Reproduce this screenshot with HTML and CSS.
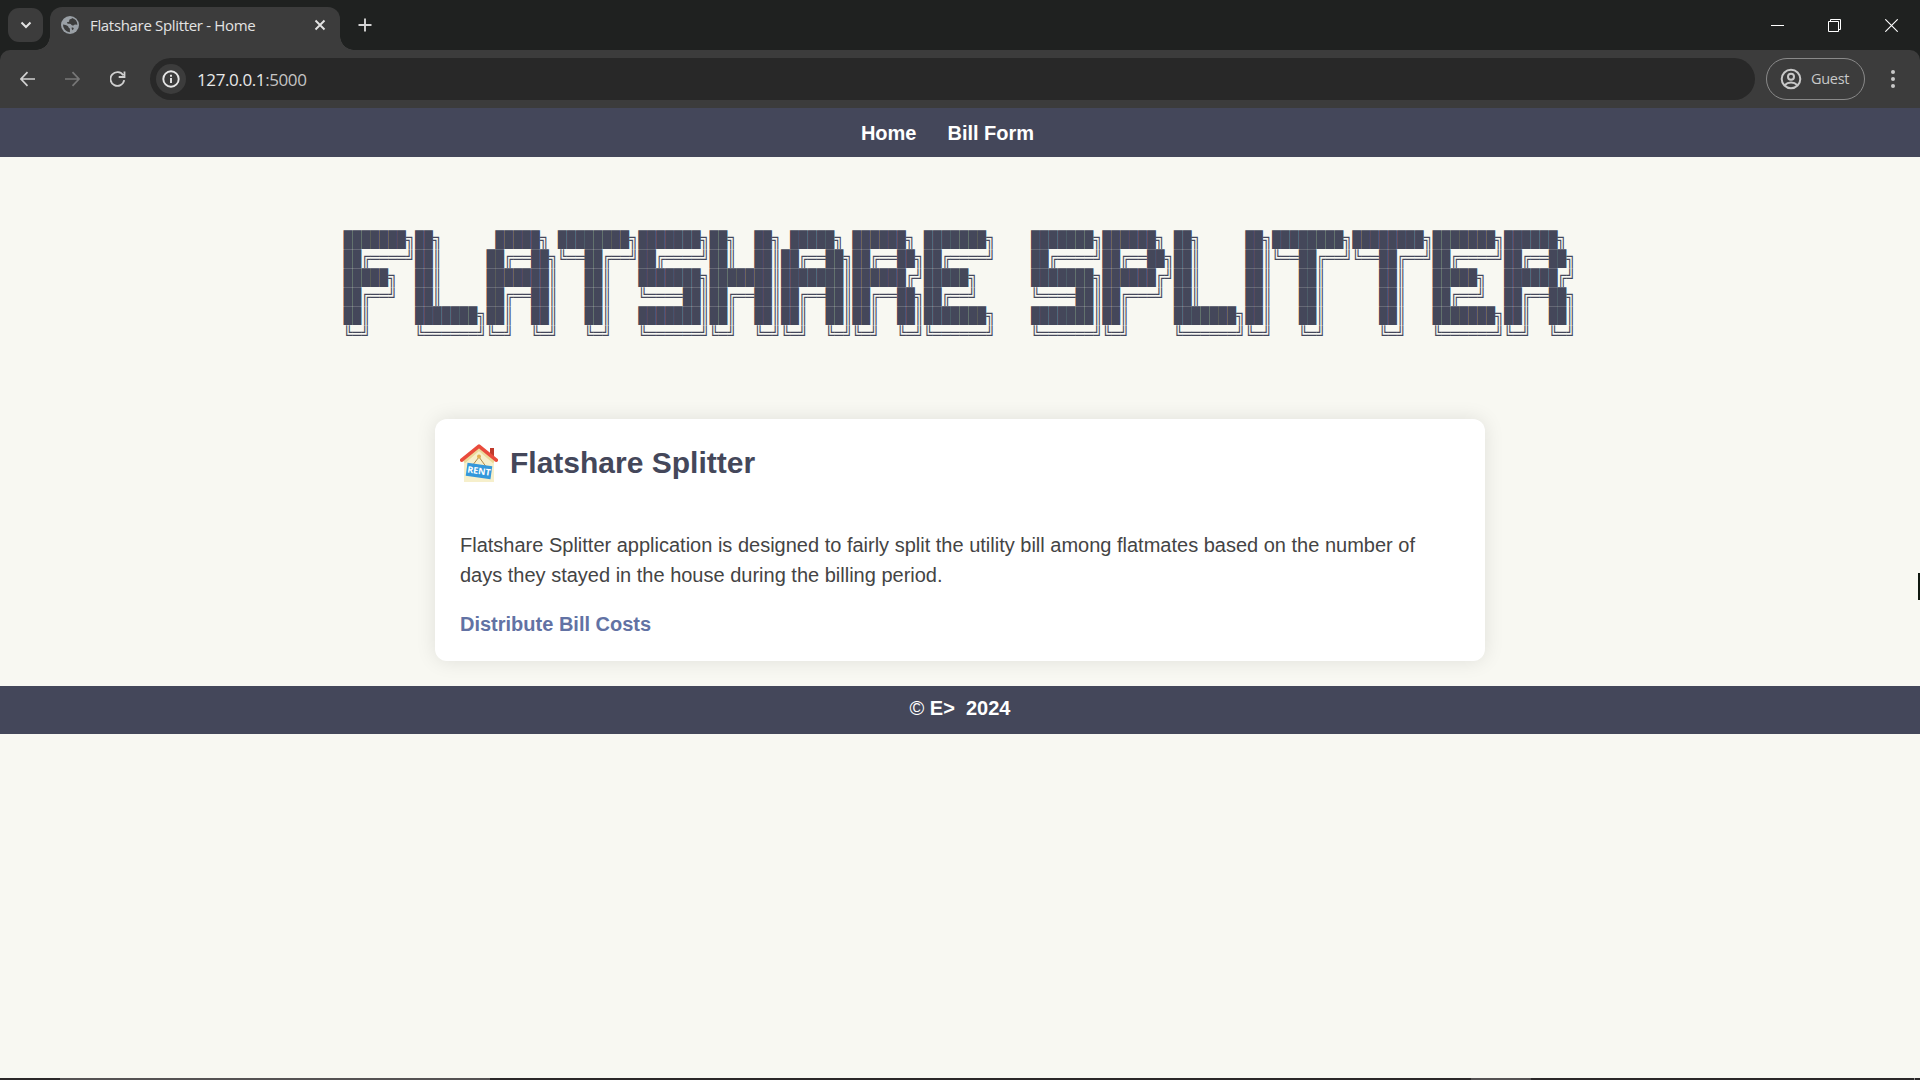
FILE: index.html
```html
<!DOCTYPE html>
<html lang="en">
<head>
<meta charset="utf-8">
<title>Flatshare Splitter - Home</title>
<link rel="stylesheet" href="styles.css">
</head>
<body>
<div class="browser">
  <div class="tabstrip">
    <button class="tab-search" aria-label="Search tabs">
      <svg width="12" height="8" viewBox="0 0 12 8"><path d="M1.5 1.5 6 6l4.500-4.500" fill="none" stroke="#e3e3e3" stroke-width="2"/></svg>
    </button>
    <div class="tab">
      <svg class="globe" width="18" height="18" viewBox="0 0 18 18"><circle cx="9" cy="9" r="9" fill="#9aa0a6"/><path d="M2 8.500c1.500.2 3.500.3 5 1.800.9.900.2 1.900 1.900 2.200v3.800A7.400 7.400 0 0 1 2 8.500zM11 2c-.2 1.300-1.800 1-2.400 1.600-.8.800.2 1.500-.7 2.200-.8.600-1.700.100-2 1 0 1 1.800.9 2.900.9 1.500 0 1.500 1.900 3 1.900 1.200 0 1.300-1 2.200-1.100l2.400.200A7.300 7.300 0 0 0 11 2zM10.500 11.800c.9-.6 2-.4 2.200.5.200 1-.8 1.400-1.500 1.900z" fill="#3c3c3c"/></svg>
      <span class="tab-title">Flatshare Splitter - Home</span>
      <svg class="tab-close" width="12" height="12" viewBox="0 0 12 12"><path d="M1.500 1.500l9 9m0-9l-9 9" stroke="#e3e3e3" stroke-width="1.900"/></svg>
    </div>
    <svg class="new-tab" width="14" height="14" viewBox="0 0 14 14"><path d="M7 .5v13M.5 7h13" stroke="#d4d4d4" stroke-width="1.900"/></svg>
    <div class="window-buttons">
      <svg width="13" height="13" viewBox="0 0 13 13"><path d="M0 6.500h13" stroke="#fff"/></svg>
      <svg width="13" height="13" viewBox="0 0 13 13"><path d="M.5 2.500h10v10H.5zM2.500 2.500v-2h10v10h-2" fill="none" stroke="#fff"/></svg>
      <svg width="13" height="13" viewBox="0 0 13 13"><path d="M.3.3l12.400 12.400M12.700.3L.3 12.700" stroke="#fff" stroke-width="1.100"/></svg>
    </div>
  </div>
  <div class="toolbar">
    <svg class="tool" width="16" height="16" viewBox="0 0 16 16"><path d="M15 8H1.500M7.500 1.200 1 8 7.500 14.800" fill="none" stroke="#d0d0d0" stroke-width="1.700"/></svg>
    <svg class="tool" width="16" height="16" viewBox="0 0 16 16"><path d="M0 8H13.500M7.500 1.200 14 8 7.500 14.800" fill="none" stroke="#777" stroke-width="1.700"/></svg>
    <svg class="tool" width="16" height="16" viewBox="0 0 16 16"><path d="M14.200 9.200A6.900 6.900 0 1 1 13.300 4.400M14.500 .4V6H8.700" fill="none" stroke="#d0d0d0" stroke-width="1.800"/></svg>
    <div class="address">
      <span class="site-info"><svg width="18" height="18" viewBox="0 0 18 18"><circle cx="9" cy="9" r="7.700" fill="none" stroke="#e6e6e6" stroke-width="1.900"/><path d="M9 8v5M9 4.800v1.900" stroke="#e6e6e6" stroke-width="1.900"/></svg></span>
      <span class="url">127.0.0.1<span class="port">:5000</span></span>
    </div>
    <div class="profile">
      <svg width="22" height="22" viewBox="0 0 22 22" fill="none" stroke="#c8c8c8" stroke-width="2"><circle cx="11" cy="11" r="9.300"/><circle cx="11" cy="8.700" r="3"/><path d="M4.600 17.300c3.500-3.600 9.300-3.600 12.800 0"/></svg>
      <span>Guest</span>
    </div>
    <svg class="menu" width="4" height="18" viewBox="0 0 4 18" fill="#c8c8c8"><circle cx="2" cy="2" r="2"/><circle cx="2" cy="9" r="2"/><circle cx="2" cy="16" r="2"/></svg>
  </div>
</div>
<main class="page">
  <nav class="nav"><a>Home</a><a>Bill Form</a></nav>
  <div class="banner"><pre class="banner-art">
███████╗██╗      █████╗ ████████╗███████╗██╗  ██╗ █████╗ ██████╗ ███████╗    ███████╗██████╗ ██╗     ██╗████████╗████████╗███████╗██████╗ 
██╔════╝██║     ██╔══██╗╚══██╔══╝██╔════╝██║  ██║██╔══██╗██╔══██╗██╔════╝    ██╔════╝██╔══██╗██║     ██║╚══██╔══╝╚══██╔══╝██╔════╝██╔══██╗
█████╗  ██║     ███████║   ██║   ███████╗███████║███████║██████╔╝█████╗      ███████╗██████╔╝██║     ██║   ██║      ██║   █████╗  ██████╔╝
██╔══╝  ██║     ██╔══██║   ██║   ╚════██║██╔══██║██╔══██║██╔══██╗██╔══╝      ╚════██║██╔═══╝ ██║     ██║   ██║      ██║   ██╔══╝  ██╔══██╗
██║     ███████╗██║  ██║   ██║   ███████║██║  ██║██║  ██║██║  ██║███████╗    ███████║██║     ███████╗██║   ██║      ██║   ███████╗██║  ██║
╚═╝     ╚══════╝╚═╝  ╚═╝   ╚═╝   ╚══════╝╚═╝  ╚═╝╚═╝  ╚═╝╚═╝  ╚═╝╚══════╝    ╚══════╝╚═╝     ╚══════╝╚═╝   ╚═╝      ╚═╝   ╚══════╝╚═╝  ╚═╝</pre></div>
  <section class="card">
    <h1 class="title">
      <svg width="38" height="38" viewBox="0 0 38 38">
        <path d="M30 4h4v12h-4z" fill="#c0392b"/>
        <path d="M4 16 19 3l15 13v22H4z" fill="#f6efcb"/>
        <path d="M4 18 19 5l15 13" fill="none" stroke="#ecd99a" stroke-width="3"/>
        <path d="M1.700 16.200 19 2.200l17.300 14" fill="none" stroke="#e94b3c" stroke-width="3.600" stroke-linecap="round" stroke-linejoin="round"/>
        <path d="M12 22 19 13l8 11" fill="none" stroke="#b08a4a"/>
        <circle cx="19" cy="12.500" r="2" fill="#e0b050"/>
        <g transform="rotate(8 19 27)"><path d="M6.500 20.500h25v13h-25z" fill="#3498db"/><text x="19" y="30.200" class="rent">RENT</text></g>
      </svg>
      <span>Flatshare Splitter</span>
    </h1>
    <p class="intro">Flatshare Splitter application is designed to fairly split the utility bill among flatmates based on the number of days they stayed in the house during the billing period.</p>
    <a class="action">Distribute Bill Costs</a>
  </section>
  <footer class="footer"><span class="copy">©</span> E&gt;&nbsp; 2024</footer>
</main>
<div class="taskbar"><i class="task-window"></i><i class="task-tray"></i><i class="task-edge"></i></div>
<i class="pointer"></i>
</body>
</html>
```
FILE: styles.css
```css
* { box-sizing: border-box; }
body {
  margin: 0;
  height: 1080px;
  overflow: hidden;
  display: flex;
  flex-direction: column;
  background: #f8f8f2;
  font-family: "Liberation Sans", Arial, sans-serif;
}
svg { display: block; flex: none; }
.browser { flex: none; height: 108px; background: #1f2120; font-family: "Open Sans", "Noto Sans", sans-serif; }
.tabstrip { height: 50px; display: flex; align-items: center; padding-left: 8px; }
.tab-search {
  width: 35px; height: 34px; border: 0; border-radius: 11px; background: #3c3c3c;
  display: flex; align-items: center; justify-content: center; padding: 0;
}
.tab {
  position: relative;
  align-self: flex-end;
  width: 290px; height: 43px; margin-left: 7px; padding: 0 14px 7px 11px;
  display: flex; align-items: center;
  background: #3c3c3c; border-radius: 12px 12px 0 0;
}
.tab::before, .tab::after {
  content: ""; position: absolute; bottom: 0; width: 14px; height: 14px;
}
.tab::before { left: -14px; background: radial-gradient(circle at 0 0, transparent 13.500px, #3c3c3c 14px); }
.tab::after { right: -14px; background: radial-gradient(circle at 100% 0, transparent 13.500px, #3c3c3c 14px); }
.tab-title { flex: 1; margin-left: 11px; color: #e3e3e3; font-size: 15px; letter-spacing: -0.330px; line-height: 20px; white-space: nowrap; }
.new-tab { margin-left: 18px; }
.window-buttons { margin-left: auto; display: flex; gap: 44px; padding-right: 22px; }
.toolbar {
  height: 58px; display: flex; align-items: center; padding: 0 25px 0 20px;
  background: #3c3c3c; border-radius: 10px 10px 0 0;
}
.tool { margin-right: 29px; }
.address {
  flex: 1; height: 42px; margin-left: -5px; padding-left: 6px; border-radius: 21px; background: #282828;
  display: flex; align-items: center;
}
.site-info {
  width: 30px; height: 30px; border-radius: 50%; background: #3c3c3c;
  display: flex; align-items: center; justify-content: center;
}
.url { margin-left: 11px; color: #e8e8e8; font-size: 17px; letter-spacing: -0.400px; }
.port { color: #c4c4c4; }
.profile {
  width: 99px; height: 42px; margin-left: 11px; padding-left: 13px; border: 1px solid #8a8a8a; border-radius: 21px;
  display: flex; align-items: center; gap: 9px; color: #c8c8c8; font-size: 14.500px; letter-spacing: -0.300px;
}
.profile span { line-height: 20px; padding-bottom: 1px; }
.menu { margin-left: 26px; }
.page { flex: 1; }
.nav {
  height: 49px; background: #44475a; display: flex; justify-content: center; align-items: center; gap: 31px;
  padding: 2px 25px 0 0; color: #fff; font-size: 20px; font-weight: bold;
}
.banner { height: 262px; padding: 74px 1px 0 0; display: flex; justify-content: center; }
.banner-art {
  margin: 0; height: 114px; color: #44475a;
  font: 14.880px/17px "Liberation Mono", monospace;
  transform: scaleY(1.1176); transform-origin: 0 0;
}
.card {
  width: 1050px; height: 242px; margin: 0 auto; padding: 25px; background: #fff; border-radius: 12px;
  box-shadow: 0 0 20px rgba(0, 0, 0, .1);
}
.title { margin: 0; height: 38px; display: flex; align-items: center; gap: 12px; color: #44475a; font-size: 30px; }
.rent { font: bold 9px "Open Sans", sans-serif; fill: #fff; text-anchor: middle; }
.intro { margin: 48px 0 19px; color: #444; font-size: 20px; line-height: 30px; }
.action { color: #6272a4; font-size: 20px; font-weight: bold; line-height: 30px; }
.footer {
  height: 48px; margin-top: 25px; background: #44475a; color: #fff; font-size: 20px; font-weight: bold;
  line-height: 45px; text-align: center;
}
.copy { font-weight: normal; }
.taskbar { flex: none; height: 2px; background: #2b2829; display: flex; }
.task-window { width: 430px; margin-left: 60px; background: #555253; }
.task-tray { width: 60px; margin-left: 981px; background: #555253; }
.task-edge { width: 1px; margin-left: 383px; background: #8a8a8a; }
.pointer { position: absolute; left: 1918px; top: 573px; width: 2px; height: 27px; background: #101810; }
```
